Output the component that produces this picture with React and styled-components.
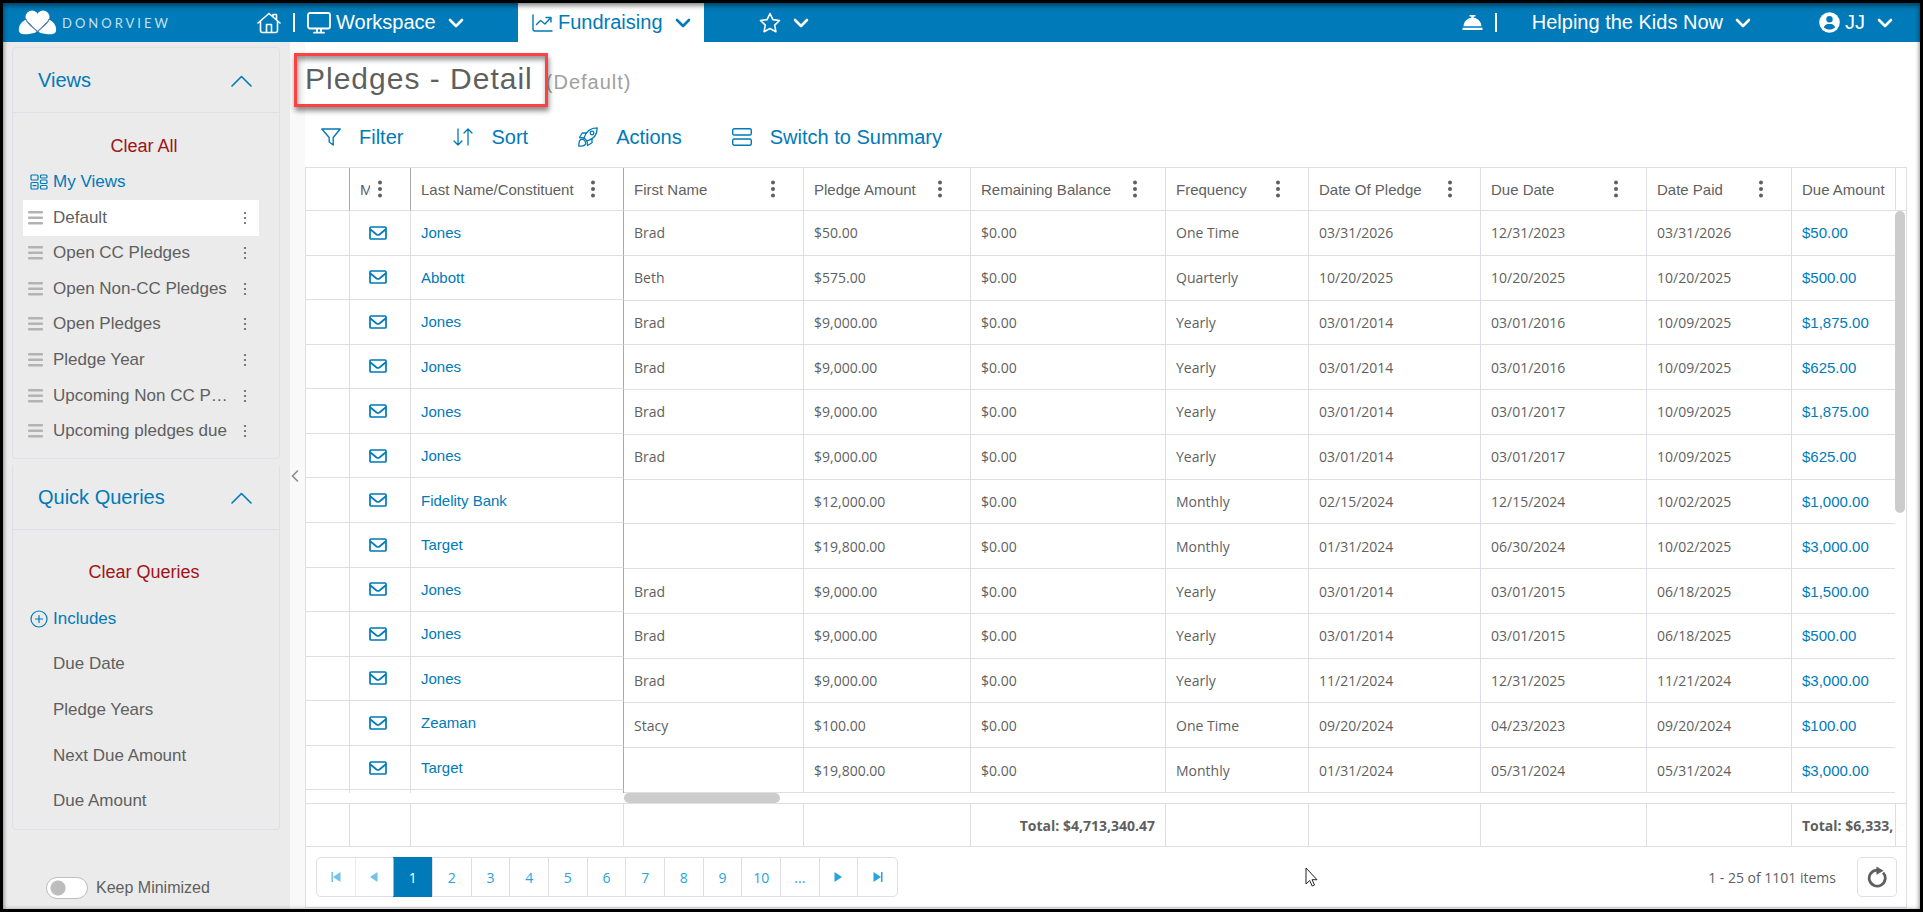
import React, { useState } from "react";
import styled, { createGlobalStyle, css } from "styled-components";

const GlobalStyle = createGlobalStyle`
  * {
    box-sizing: border-box;
  }
  body {
    margin: 0;
    background: #000;
    font-family: "Liberation Sans", Arial, sans-serif;
    color: #5f5f5f;
  }
  button {
    margin: 0;
    padding: 0;
    border: 0;
    background: none;
    font: inherit;
    color: inherit;
    cursor: pointer;
  }
  a {
    color: #007ab8;
    text-decoration: none;
  }
  svg {
    display: block;
    flex: none;
  }
`;

const Frame = styled.div`
  position: relative;
  display: flex;
  flex-direction: column;
  min-height: 100vh;
  border: 3px solid #000;
  background: #fff;

  &::after {
    content: "";
    position: absolute;
    inset: 0;
    pointer-events: none;
    box-shadow: inset 0 3px 5px rgba(0, 0, 0, 0.4),
      inset 0 0 4px rgba(0, 0, 0, 0.25);
  }
`;

/* ---------- top bar ---------- */

const TopBar = styled.header`
  display: flex;
  align-items: center;
  height: 39px;
  padding: 0 27px 0 15px;
  background: #007ab8;
  color: #fff;
  font-size: 20px;
`;

const Brand = styled.a`
  display: flex;
  align-items: center;
  gap: 5px;
  width: 239px;
  color: #c3e1f1;
  font-family: Lato, sans-serif;
  font-size: 13px;
  letter-spacing: 3px;
`;

const NavGroup = styled.nav`
  display: flex;
  align-items: center;
  align-self: stretch;
`;

const NavButton = styled.button`
  display: flex;
  align-items: center;
  gap: 12px;
  height: 100%;
`;

const IconLabel = styled.span`
  display: flex;
  align-items: center;
  gap: 5px;
`;

const Bar = styled.span`
  width: 2px;
  height: 19px;
  margin: 0 12px;
  background: #fff;
`;

const WorkspaceArea = styled.div`
  display: flex;
  align-items: center;
  width: 261px;
`;

const ActiveTab = styled(NavButton)`
  width: 186px;
  padding-left: 14px;
  background: #fff;
  color: #007ab8;
  margin-right: 55px;
`;

const AccountArea = styled(NavGroup)`
  margin-left: auto;
`;

const OrgButton = styled(NavButton)`
  margin: 0 68px 0 23px;
`;

/* ---------- side bar ---------- */

const Body = styled.div`
  display: flex;
  flex: 1;
`;

const SideBar = styled.aside`
  width: 287px;
  padding: 5px 10px 0 9px;
  background: #ebebeb;
  flex: none;
`;

const Panel = styled.section`
  border: 1px solid #dfe0e6;
  border-radius: 4px;
  margin-bottom: 5px;

  & + & {
    border-top-color: transparent;
  }
`;

const PanelHead = styled.button`
  display: flex;
  justify-content: space-between;
  align-items: center;
  width: 100%;
  height: 65px;
  padding: 1px 27px 0 25px;
  border-bottom: 1px solid #dcdfe6;
  color: #007ab8;
  font-size: 20px;
`;

const ClearButton = styled.button`
  display: block;
  width: 262px;
  margin-top: ${props => props.$top}px;
  line-height: 20px;
  font-size: 18px;
  color: #a01418;
`;

const GroupTitle = styled.h3`
  display: flex;
  align-items: center;
  gap: 5px;
  margin: 0;
  padding-left: 17px;
  font-size: 17px;
  font-weight: normal;
  line-height: 20px;
  color: #007ab8;
`;

const ViewsTitle = styled(GroupTitle)`
  margin: 16px 0 8px;
`;

const ViewList = styled.ul`
  display: grid;
  grid-auto-rows: 1fr;
  height: 249px;
  margin: 0 20px 9px 10px;
  padding: 0;
  list-style: none;
`;

const ViewItem = styled.li`
  display: flex;
  align-items: center;
  padding: 0 12px 0 5px;
  font-size: 17px;
  background: ${props => (props.$active ? "#fff" : "transparent")};
`;

const ViewName = styled.button`
  width: 176px;
  margin: 0 auto 0 10px;
  text-align: left;
  white-space: nowrap;
  overflow: hidden;
  text-overflow: ellipsis;
`;

const QueryList = styled.ul`
  display: grid;
  grid-auto-rows: 1fr;
  height: 228px;
  margin: 14px 0 5px;
  padding: 0;
  list-style: none;
  font-size: 17px;

  li {
    display: flex;
    align-items: center;
  }
`;

const QueryButton = styled.button`
  padding-left: 40px;
`;

const KeepMinimized = styled.div`
  display: flex;
  align-items: center;
  gap: 8px;
  margin: 47px 0 0 34px;
  font-size: 16px;
`;

const Toggle = styled.input`
  appearance: none;
  width: 42px;
  height: 22px;
  margin: 0;
  border: 1px solid #bdbdbd;
  border-radius: 11px;
  background: radial-gradient(circle at 11px 10px, #bdbdbd 7px, #fff 8px);

  &:checked {
    background: radial-gradient(circle at 29px 10px, #007ab8 7px, #fff 8px);
  }
`;

const Splitter = styled.button`
  display: flex;
  align-items: center;
  width: 15px;
  padding-left: 1px;
  background: #f9f9f9;
  color: #8a8a8a;
`;

/* ---------- main area ---------- */

const Main = styled.main`
  flex: 1;
  min-width: 0;
  padding: 19px 13px 1px 0;
`;

const TitleRow = styled.div`
  display: flex;
  align-items: baseline;
  gap: 13px;
  height: 36px;
  letter-spacing: 1px;
  line-height: 36px;
`;

const Title = styled.h1`
  position: relative;
  margin: 0;
  font-size: 30px;
  font-weight: normal;

  &::after {
    content: "";
    position: absolute;
    inset: -8px -15px -10px -11px;
    border: 3px solid #fd4242;
    box-shadow: 1px 4px 5px rgba(0, 0, 0, 0.45),
      inset 1px 4px 5px rgba(0, 0, 0, 0.4);
  }
`;

const TitleNote = styled.span`
  font-size: 20px;
  color: #9f9f9f;
`;

const ToolBar = styled.div`
  display: flex;
  gap: 50px;
  margin: 25px 0 15px;
  padding-left: 16px;
`;

const ToolButton = styled.button`
  display: flex;
  align-items: center;
  gap: 18px;
  height: 30px;
  font-size: 20px;
  color: #007ab8;
`;

const Grid = styled.section`
  border: 1px solid #dedfe6;
`;

const Band = styled.div`
  display: flex;
  height: ${props => props.$height}px;
  overflow: hidden;
`;

const LockedPane = styled.div`
  width: 318px;
  flex: none;
`;

const ScrollPane = styled.div`
  flex: 1;
  min-width: 0;
  overflow: hidden;
`;

const Stub = styled.div`
  width: 11px;
  flex: none;
  border: solid #dedfe6;
  border-width: 0 0 1px 1px;
`;

const Table = styled.table`
  width: 100%;
  height: ${props => props.$height}px;
  table-layout: fixed;
  border-collapse: separate;
  border-spacing: 0;
  font-size: 15px;

  tr {
    height: 40px;
  }
  th,
  td {
    padding: 0 0 0 10px;
    border: solid #dedfe6;
    border-width: 0 1px 1px 0;
    text-align: left;
    font-weight: normal;
    white-space: nowrap;
    overflow: hidden;
  }
  th:last-child,
  td:last-child {
    border-right: ${props => (props.$locked ? "1px solid #a9a9ad" : "0")};
  }
  ${props =>
    props.$locked &&
    css`
      th {
        border-right-color: #a9a9ad;
      }
    `}
`;

const FootTable = styled(Table)`
  font-family: "Open Sans", sans-serif;
  font-size: 14px;

  td {
    font-weight: bold;
    text-align: right;
    padding-right: 10px;
  }
  td:last-child {
    text-align: left;
    padding-right: 0;
    border-right: ${props => (props.$locked ? "1px solid #dedfe6" : "0")};
  }
`;

const PlainCell = styled.td`
  font-family: "Open Sans", sans-serif;
  font-size: 14px;
`;

const MailCell = styled.td`
  svg {
    margin-left: 9px;
    color: #007ab8;
  }
`;

const HeadCell = styled.div`
  display: flex;
  align-items: center;
  justify-content: space-between;
  padding-right: 28px;

  span {
    overflow: hidden;
  }
`;

const DotsButton = styled.button`
  padding-left: 8px;
  flex: none;
`;

const ScrollTrack = styled.div`
  width: 11px;
  flex: none;
`;

const VerticalThumb = styled.div`
  width: 10px;
  height: 302px;
  border-radius: 5px;
  background: #ccc;
`;

const ScrollRow = styled.div`
  height: 11px;
  padding-left: 318px;
  border-bottom: 1px solid #dedfe6;
`;

const HorizontalThumb = styled.div`
  width: 156px;
  height: 10px;
  border-radius: 5px;
  background: #ccc;
`;

const Pager = styled.div`
  display: flex;
  align-items: center;
  height: 60px;
  padding: 0 9px 0 10px;
  font-family: "Open Sans", sans-serif;
  font-size: 14px;
`;

const Pages = styled.div`
  display: grid;
  grid-template-columns: repeat(15, 1fr);
  width: 582px;
  height: 40px;
  border: 1px solid #dedfe6;
  border-radius: 5px;
`;

const PageButton = styled.button`
  display: flex;
  align-items: center;
  justify-content: center;
  border-right: 1px solid #dedfe6;
  color: #28a4dd;

  &:last-child {
    border-right: 0;
  }
  &:disabled {
    opacity: 0.65;
  }
  ${props =>
    props.$current &&
    css`
      margin: -1px 0 -1px -1px;
      background: #007ab8;
      color: #fff;
    `}
`;

const ItemCount = styled.span`
  margin: 0 21px 0 auto;
`;

const RefreshButton = styled.button`
  display: flex;
  align-items: center;
  justify-content: center;
  width: 40px;
  height: 40px;
  border: 1px solid #dedfe6;
  border-radius: 5px;
`;

const Pointer = styled.svg`
  position: absolute;
  left: 1302px;
  top: 864px;
`;

/* ---------- icons ---------- */

const line = {
  fill: "none",
  stroke: "currentColor",
  strokeLinecap: "round",
  strokeLinejoin: "round"
};

const LogoIcon = () => (
  <svg width="39" height="25" viewBox="0 0 39 25">
    <g fill="#fff">
      <circle cx="14" cy="7" r="6.5" />
      <circle cx="25" cy="7" r="6.5" />
      <path d="M8 9h23l-11.500 13z" />
      <path d="M7 10C3 12 0 17 1 21c1 4 7 3.500 10 3 4-.5 7-1 7.500-3C15 18 10 14 7.500 10z" />
      <path d="M32 10c4 2 7 7 6 11-1 4-7 3.500-10 3-4-.5-7-1-7.500-3C24 18 29 14 31.500 10z" />
    </g>
    <path
      d="M8 9c1 5 7 8 11.500 12.500C24 17 30 14 31 9"
      fill="none"
      stroke="#6f7fae"
      strokeWidth="1.200"
    />
  </svg>
);

const HomeIcon = () => (
  <svg width="24" height="22" viewBox="0 0 24 22" {...line} strokeWidth="1.600">
    <path d="M1 11 12 1.500 23 11M3.500 9.500v9q0 2 2 2h13q2 0 2-2v-9M16 4.500V2.500h3.500v5M9.500 20.500v-8h5v8" />
  </svg>
);

const MonitorIcon = () => (
  <svg width="24" height="22" viewBox="0 0 24 22" {...line} strokeWidth="1.800">
    <rect x="1" y="1" width="22" height="15.500" rx="2" />
    <path d="M10 17v3M14 17v3M7 20.700h10" />
  </svg>
);

const CaretIcon = () => (
  <svg width="16" height="10" viewBox="0 0 16 10" {...line} strokeWidth="2.600">
    <path d="m2 2 6 6 6-6" />
  </svg>
);

const ChartIcon = () => (
  <svg width="21" height="18" viewBox="0 0 21 18" {...line} strokeWidth="1.400">
    <path d="M1 1v14q0 2 2 2h17M4.500 10.500l4-4 4.500 3.500 5.500-6M14 3.500h5v4.500" />
  </svg>
);

const StarIcon = () => (
  <svg width="22" height="21" viewBox="0 0 22 21" {...line} strokeWidth="1.600">
    <path d="m11 1.500 2.900 6.100 6.600.9-4.800 4.600 1.200 6.600-5.900-3.200-5.900 3.200 1.200-6.600L1.500 8.500l6.600-.9z" />
  </svg>
);

const BellIcon = () => (
  <svg width="21" height="16" viewBox="0 0 21 16" fill="currentColor">
    <path d="M7.500 0h6v1.500h-1.800v1.200c4.300.6 7.500 4 7.800 8.500h-18C1.800 6.700 5 3.300 9.300 2.700V1.500H7.500zM.5 12.800h20V15H.5z" />
  </svg>
);

const UserIcon = () => (
  <svg width="21" height="21" viewBox="0 0 21 21">
    <circle cx="10.500" cy="10.500" r="10.300" fill="currentColor" />
    <circle cx="10.500" cy="7.300" r="3.200" fill="#007ab8" />
    <path d="M4.800 15.200C6 12.500 8 12 10.500 12s4.500.5 5.700 3.200c-3 3.200-8.400 3.200-11.400 0z" fill="#007ab8" />
  </svg>
);

const ChevronUp = () => (
  <svg width="21" height="12" viewBox="0 0 21 12" {...line} strokeWidth="1.600">
    <path d="m1 11 9.500-9.500L20 11" />
  </svg>
);

const ViewsIcon = () => (
  <svg width="18" height="16" viewBox="0 0 18 16" {...line} strokeWidth="1.200">
    <rect x="1" y="1" width="7" height="5" rx="1" />
    <rect x="10.500" y="1" width="6.500" height="3" rx="1" />
    <rect x="10.500" y="6" width="6.500" height="3.500" rx="1" />
    <rect x="1" y="8.500" width="7" height="6.500" rx="1" />
    <rect x="10.500" y="11.500" width="6.500" height="3.500" rx="1" />
    <path d="M3 11.700h3" />
  </svg>
);

const PlusCircle = () => (
  <svg width="18" height="18" viewBox="0 0 18 18" {...line} strokeWidth="1.200">
    <circle cx="9" cy="9" r="8" />
    <path d="M5.500 9h7M9 5.500v7" />
  </svg>
);

const GripIcon = () => (
  <svg width="15" height="14" viewBox="0 0 15 14" fill="#b3b3b3">
    <rect width="15" height="2.500" rx="1" />
    <rect y="5.500" width="15" height="2.500" rx="1" />
    <rect y="11" width="15" height="2.500" rx="1" />
  </svg>
);

const SmallDots = () => (
  <svg width="4" height="14" viewBox="0 0 4 14" fill="#5f5f5f">
    <circle cx="2" cy="2" r="1.100" />
    <circle cx="2" cy="7" r="1.100" />
    <circle cx="2" cy="12" r="1.100" />
  </svg>
);

const Dots = () => (
  <svg width="4" height="18" viewBox="0 0 4 18" fill="#5f5f5f">
    <circle cx="2" cy="2.500" r="2" />
    <circle cx="2" cy="9" r="2" />
    <circle cx="2" cy="15.500" r="2" />
  </svg>
);

const CollapseIcon = () => (
  <svg width="8" height="12" viewBox="0 0 8 12" {...line} strokeWidth="1.600">
    <path d="M6.500 1 1.500 6l5 5" />
  </svg>
);

const FilterIcon = () => (
  <svg width="20" height="18" viewBox="0 0 20 18" {...line} strokeWidth="1.400">
    <path d="M.8 1h18.400l-7 8.500v7.500l-4-3V9.500z" />
  </svg>
);

const SortIcon = () => (
  <svg width="20" height="18" viewBox="0 0 20 18" {...line} strokeWidth="1.300">
    <path d="M5 1v16M1 13l4 4 4-4M15 17V1M11 5l4-4 4 4" />
  </svg>
);

const RocketIcon = () => (
  <svg width="20" height="20" viewBox="0 0 20 20" {...line} strokeWidth="1.300">
    <path d="M6 11C8 4 12 .8 19.200.8 19.300 8 16 12 9 14z" />
    <circle cx="14" cy="6" r="1.800" />
    <path d="M8.500 6H4.200L1.500 10.500l4.500.5M14 11.500v4.300L9.500 18.500 9 14" />
    <path d="M3 12.500c-2 .5-2.200 4-2.200 6.700 3 0 6-.2 6.700-2.200.6-3-2-5.200-4.500-4.500z" />
  </svg>
);

const SummaryIcon = () => (
  <svg width="20" height="18" viewBox="0 0 20 18" {...line} strokeWidth="1.400">
    <rect x=".7" y=".7" width="18.600" height="6.300" rx="1.500" />
    <rect x=".7" y="11" width="18.600" height="6.300" rx="1.500" />
  </svg>
);

const MailIcon = () => (
  <svg width="18" height="14" viewBox="0 0 18 14" {...line} strokeWidth="1.700">
    <rect x="1" y="1" width="16" height="12" rx="1" />
    <path d="m1.500 3.500 6 5q1.500 1 3 0l6-5" />
  </svg>
);

const PageArrow = ({ flip, end }) => (
  <svg
    width="10"
    height="10"
    viewBox="0 0 10 10"
    fill="currentColor"
    transform={flip ? "scale(-1 1)" : undefined}
  >
    <path d={end ? "M.5 0 8 5 .5 10zM8 0h1.500v10H8z" : "M1.500 0 9 5l-7.500 5z"} />
  </svg>
);

const RefreshIcon = () => (
  <svg width="22" height="22" viewBox="0 0 20 20">
    <path
      d="M15.500 6A7.300 7.300 0 1 1 10 3.700"
      fill="none"
      stroke="#5f5f5f"
      strokeWidth="2.500"
    />
    <path d="M9.500.5 16 4.300 9.500 8z" fill="#5f5f5f" />
  </svg>
);

/* ---------- data ---------- */

const views = [
  "Default",
  "Open CC Pledges",
  "Open Non-CC Pledges",
  "Open Pledges",
  "Pledge Year",
  "Upcoming Non CC Pledges",
  "Upcoming pledges due"
];

const queries = ["Due Date", "Pledge Years", "Next Due Amount", "Due Amount"];

const columns = [
  { title: "First Name", width: 180 },
  { title: "Pledge Amount", width: 167 },
  { title: "Remaining Balance", width: 195, total: "Total: $4,713,340.47" },
  { title: "Frequency", width: 143 },
  { title: "Date Of Pledge", width: 172 },
  { title: "Due Date", width: 166 },
  { title: "Date Paid", width: 145 },
  { title: "Due Amount", total: "Total: $6,333," }
];

// last name, first name, amount, balance, frequency, pledged, due, paid, due amount
const pledges = [
  ["Jones", "Brad", "$50.00", "$0.00", "One Time", "03/31/2026", "12/31/2023", "03/31/2026", "$50.00"],
  ["Abbott", "Beth", "$575.00", "$0.00", "Quarterly", "10/20/2025", "10/20/2025", "10/20/2025", "$500.00"],
  ["Jones", "Brad", "$9,000.00", "$0.00", "Yearly", "03/01/2014", "03/01/2016", "10/09/2025", "$1,875.00"],
  ["Jones", "Brad", "$9,000.00", "$0.00", "Yearly", "03/01/2014", "03/01/2016", "10/09/2025", "$625.00"],
  ["Jones", "Brad", "$9,000.00", "$0.00", "Yearly", "03/01/2014", "03/01/2017", "10/09/2025", "$1,875.00"],
  ["Jones", "Brad", "$9,000.00", "$0.00", "Yearly", "03/01/2014", "03/01/2017", "10/09/2025", "$625.00"],
  ["Fidelity Bank", "", "$12,000.00", "$0.00", "Monthly", "02/15/2024", "12/15/2024", "10/02/2025", "$1,000.00"],
  ["Target", "", "$19,800.00", "$0.00", "Monthly", "01/31/2024", "06/30/2024", "10/02/2025", "$3,000.00"],
  ["Jones", "Brad", "$9,000.00", "$0.00", "Yearly", "03/01/2014", "03/01/2015", "06/18/2025", "$1,500.00"],
  ["Jones", "Brad", "$9,000.00", "$0.00", "Yearly", "03/01/2014", "03/01/2015", "06/18/2025", "$500.00"],
  ["Jones", "Brad", "$9,000.00", "$0.00", "Yearly", "11/21/2024", "12/31/2025", "11/21/2024", "$3,000.00"],
  ["Zeaman", "Stacy", "$100.00", "$0.00", "One Time", "09/20/2024", "04/23/2023", "09/20/2024", "$100.00"],
  ["Target", "", "$19,800.00", "$0.00", "Monthly", "01/31/2024", "05/31/2024", "05/31/2024", "$3,000.00"]
];

const pageLabels = ["1", "2", "3", "4", "5", "6", "7", "8", "9", "10", "..."];

const LockedCols = () => (
  <colgroup>
    <col width="44" />
    <col width="61" />
    <col width="213" />
  </colgroup>
);

const ScrollCols = () => (
  <colgroup>
    {columns.map(column => (
      <col key={column.title} width={column.width} />
    ))}
  </colgroup>
);

/* ---------- parts ---------- */

function Header() {
  return (
    <TopBar>
      <Brand href="#">
        <LogoIcon />
        DONORVIEW
      </Brand>
      <NavGroup>
        <WorkspaceArea>
          <NavButton aria-label="Home">
            <HomeIcon />
          </NavButton>
          <Bar />
          <NavButton>
            <IconLabel>
              <MonitorIcon />
              Workspace
            </IconLabel>
            <CaretIcon />
          </NavButton>
        </WorkspaceArea>
        <ActiveTab>
          <IconLabel>
            <ChartIcon />
            Fundraising
          </IconLabel>
          <CaretIcon />
        </ActiveTab>
        <NavButton aria-label="Favorites">
          <StarIcon />
          <CaretIcon />
        </NavButton>
      </NavGroup>
      <AccountArea>
        <NavButton aria-label="Notifications">
          <BellIcon />
        </NavButton>
        <Bar />
        <OrgButton>
          Helping the Kids Now
          <CaretIcon />
        </OrgButton>
        <NavButton>
          <IconLabel>
            <UserIcon />
            JJ
          </IconLabel>
          <CaretIcon />
        </NavButton>
      </AccountArea>
    </TopBar>
  );
}

function Side() {
  const [activeView, setActiveView] = useState("Default");
  return (
    <SideBar>
      <Panel>
        <PanelHead>
          Views
          <ChevronUp />
        </PanelHead>
        <ClearButton $top={23}>Clear All</ClearButton>
        <ViewsTitle>
          <ViewsIcon />
          My Views
        </ViewsTitle>
        <ViewList>
          {views.map(view => (
            <ViewItem key={view} $active={view === activeView}>
              <GripIcon />
              <ViewName onClick={() => setActiveView(view)}>{view}</ViewName>
              <button aria-label={`${view} options`}>
                <SmallDots />
              </button>
            </ViewItem>
          ))}
        </ViewList>
      </Panel>
      <Panel>
        <PanelHead>
          Quick Queries
          <ChevronUp />
        </PanelHead>
        <ClearButton $top={32}>Clear Queries</ClearButton>
        <QueryList>
          <li>
            <GroupTitle>
              <PlusCircle />
              Includes
            </GroupTitle>
          </li>
          {queries.map(query => (
            <li key={query}>
              <QueryButton>{query}</QueryButton>
            </li>
          ))}
        </QueryList>
      </Panel>
      <KeepMinimized>
        <Toggle type="checkbox" id="keep-minimized" />
        <label htmlFor="keep-minimized">Keep Minimized</label>
      </KeepMinimized>
    </SideBar>
  );
}

function HeadTitle({ title }) {
  return (
    <HeadCell>
      <span>{title}</span>
      <DotsButton aria-label={`${title} menu`}>
        <Dots />
      </DotsButton>
    </HeadCell>
  );
}

function PledgeGrid() {
  return (
    <Grid>
      <Band $height={43}>
        <LockedPane>
          <Table $height={43} $locked>
            <LockedCols />
            <thead>
              <tr>
                <th />
                <th>
                  <HeadTitle title="M" />
                </th>
                <th>
                  <HeadTitle title="Last Name/Constituent" />
                </th>
              </tr>
            </thead>
          </Table>
        </LockedPane>
        <ScrollPane>
          <Table $height={43}>
            <ScrollCols />
            <thead>
              <tr>
                {columns.map(({ title, width }) => (
                  <th key={title}>
                    {width ? <HeadTitle title={title} /> : title}
                  </th>
                ))}
              </tr>
            </thead>
          </Table>
        </ScrollPane>
        <Stub />
      </Band>

      <Band $height={582}>
        <LockedPane>
          <Table $height={624} $locked>
            <LockedCols />
            <tbody>
              {pledges.map(([lastName], index) => (
                <tr key={index}>
                  <td />
                  <MailCell>
                    <MailIcon />
                  </MailCell>
                  <td>
                    <a href="#">{lastName}</a>
                  </td>
                </tr>
              ))}
              <tr>
                <td />
                <td />
                <td />
              </tr>
            </tbody>
          </Table>
        </LockedPane>
        <ScrollPane>
          <Table $height={582}>
            <ScrollCols />
            <tbody>
              {pledges.map(([, ...values], index) => (
                <tr key={index}>
                  {values.slice(0, -1).map((value, i) => (
                    <PlainCell key={i}>{value}</PlainCell>
                  ))}
                  <td>
                    <a href="#">{values[values.length - 1]}</a>
                  </td>
                </tr>
              ))}
            </tbody>
          </Table>
        </ScrollPane>
        <ScrollTrack>
          <VerticalThumb />
        </ScrollTrack>
      </Band>

      <ScrollRow>
        <HorizontalThumb />
      </ScrollRow>

      <Band $height={43}>
        <LockedPane>
          <FootTable $height={43} $locked>
            <LockedCols />
            <tbody>
              <tr>
                <td />
                <td />
                <td />
              </tr>
            </tbody>
          </FootTable>
        </LockedPane>
        <ScrollPane>
          <FootTable $height={43}>
            <ScrollCols />
            <tbody>
              <tr>
                {columns.map(({ title, total }) => (
                  <td key={title}>{total}</td>
                ))}
              </tr>
            </tbody>
          </FootTable>
        </ScrollPane>
        <Stub />
      </Band>

      <Pager>
        <Pages>
          <PageButton disabled aria-label="First page">
            <PageArrow flip end />
          </PageButton>
          <PageButton disabled aria-label="Previous page">
            <PageArrow flip />
          </PageButton>
          {pageLabels.map(label => (
            <PageButton key={label} $current={label === "1"}>
              {label}
            </PageButton>
          ))}
          <PageButton aria-label="Next page">
            <PageArrow />
          </PageButton>
          <PageButton aria-label="Last page">
            <PageArrow end />
          </PageButton>
        </Pages>
        <ItemCount>1 - 25 of 1101 items</ItemCount>
        <RefreshButton aria-label="Refresh">
          <RefreshIcon />
        </RefreshButton>
      </Pager>
    </Grid>
  );
}

export default function App() {
  return (
    <>
      <GlobalStyle />
      <Frame>
        <Header />
        <Body>
          <Side />
          <Splitter aria-label="Collapse side bar">
            <CollapseIcon />
          </Splitter>
          <Main>
            <TitleRow>
              <Title>Pledges - Detail</Title>
              <TitleNote>(Default)</TitleNote>
            </TitleRow>
            <ToolBar>
              <ToolButton>
                <FilterIcon />
                Filter
              </ToolButton>
              <ToolButton>
                <SortIcon />
                Sort
              </ToolButton>
              <ToolButton>
                <RocketIcon />
                Actions
              </ToolButton>
              <ToolButton>
                <SummaryIcon />
                Switch to Summary
              </ToolButton>
            </ToolBar>
            <PledgeGrid />
          </Main>
        </Body>
        <Pointer width="13" height="20" viewBox="0 0 13 20">
          <path
            d="M1 1v16l3.700-3.500 2.500 5.500 2.300-1-2.500-5.300H12z"
            fill="#fff"
            stroke="#222"
          />
        </Pointer>
      </Frame>
    </>
  );
}
